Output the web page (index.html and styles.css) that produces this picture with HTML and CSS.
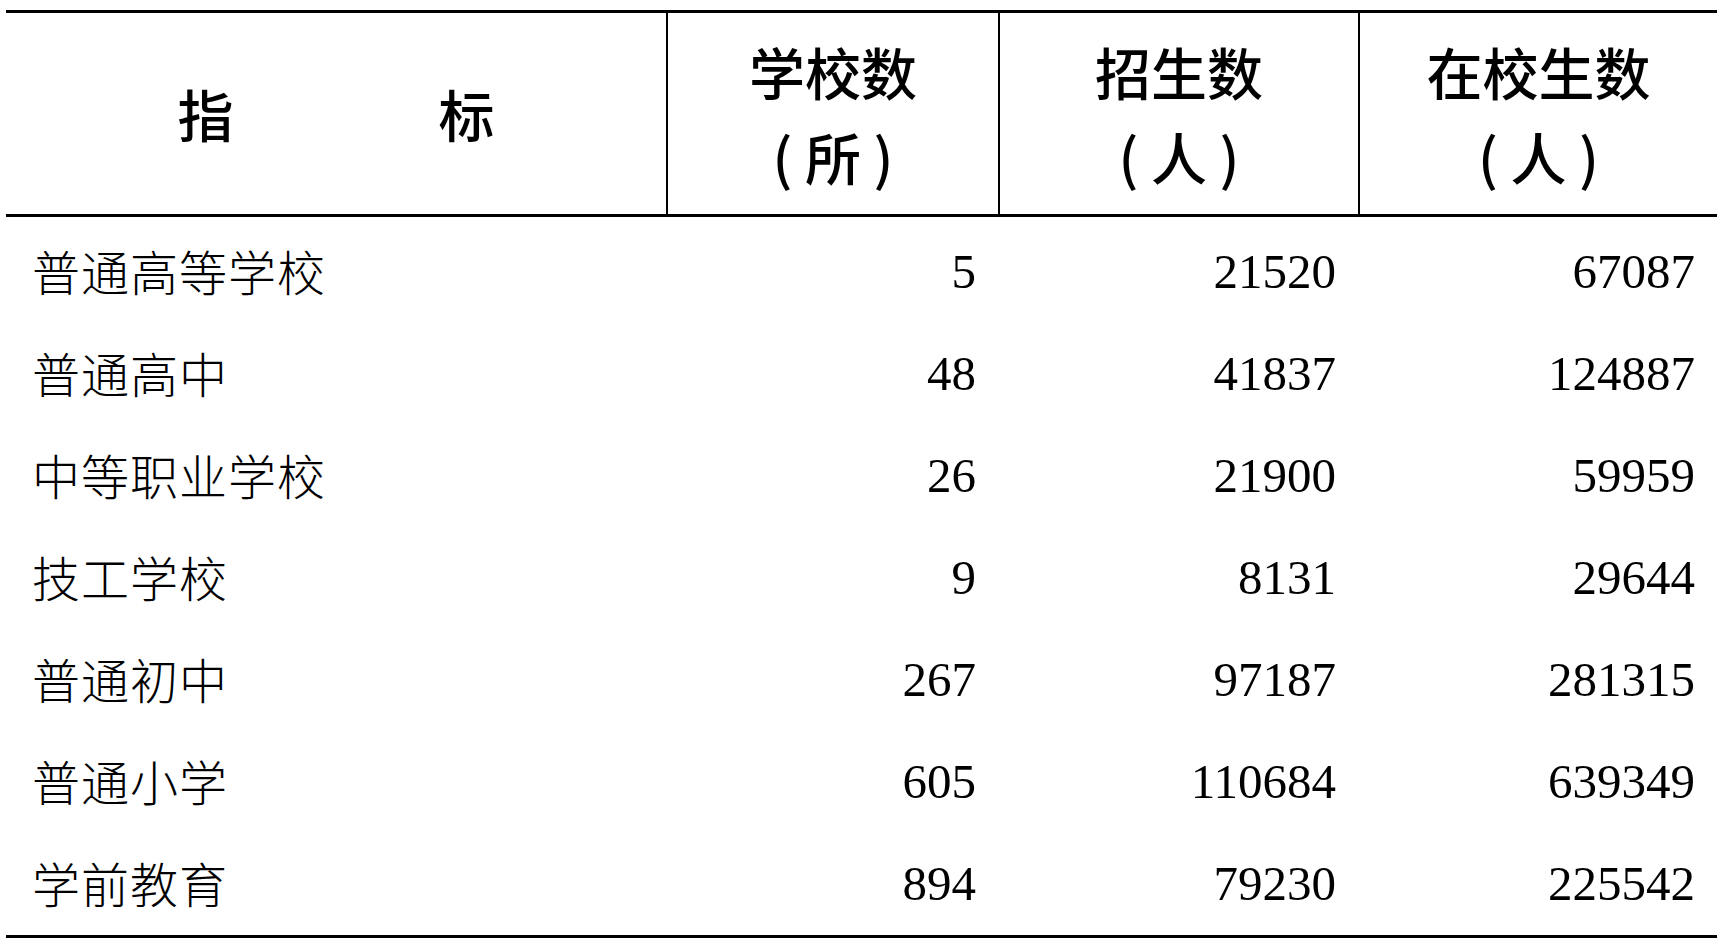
FILE: index.html
```html
<!DOCTYPE html>
<html lang="zh-CN">
<head>
<meta charset="utf-8">
<title>教育统计</title>
<link rel="stylesheet" href="styles.css">
</head>
<body>
<div class="table">
  <div class="thead">
    <div class="th th-index"><span>指</span><span>标</span></div>
    <div class="th"><span>学校数</span><span>( 所 )</span></div>
    <div class="th"><span>招生数</span><span>( 人 )</span></div>
    <div class="th"><span>在校生数</span><span>( 人 )</span></div>
  </div>
  <div class="tbody">
    <div class="row"><div class="label">普通高等学校</div><div class="num">5</div><div class="num">21520</div><div class="num">67087</div></div>
    <div class="row"><div class="label">普通高中</div><div class="num">48</div><div class="num">41837</div><div class="num">124887</div></div>
    <div class="row"><div class="label">中等职业学校</div><div class="num">26</div><div class="num">21900</div><div class="num">59959</div></div>
    <div class="row"><div class="label">技工学校</div><div class="num">9</div><div class="num">8131</div><div class="num">29644</div></div>
    <div class="row"><div class="label">普通初中</div><div class="num">267</div><div class="num">97187</div><div class="num">281315</div></div>
    <div class="row"><div class="label">普通小学</div><div class="num">605</div><div class="num">110684</div><div class="num">639349</div></div>
    <div class="row"><div class="label">学前教育</div><div class="num">894</div><div class="num">79230</div><div class="num">225542</div></div>
  </div>
</div>
</body>
</html>
```
FILE: styles.css
```css
html, body {
  margin: 0;
  padding: 0;
  background: #ffffff;
}

body {
  color: #000000;
  font-family: "Noto Sans CJK SC", sans-serif;
}

.table {
  margin: 10px 0 0 6px;
  width: 1711px;
  border-top: 3px solid #000;
  border-bottom: 3px solid #000;
}

.thead,
.row {
  display: grid;
  grid-template-columns: 660px 332px 360px 359px;
}

.thead {
  height: 201px;
  border-bottom: 3px solid #000;
}

.th {
  display: flex;
  flex-direction: column;
  align-items: center;
  justify-content: center;
  padding-bottom: 2px;
  box-sizing: border-box;
  font-family: "Noto Sans CJK SC", sans-serif;
  font-weight: 500;
  font-size: 56px;
  line-height: 85px;
  white-space: pre;
}

.th + .th {
  border-left: 2px solid #000;
}

.th-index {
  flex-direction: row;
  gap: 205px;
}

.tbody {
  height: 718px;
  padding-top: 4px;
  box-sizing: border-box;
}

.row {
  height: 102px;
  align-items: center;
}

.label {
  padding-left: 26px;
  padding-bottom: 5px;
  font-family: "Noto Sans CJK SC", sans-serif;
  font-weight: 300;
  font-size: 48px;
  letter-spacing: 1px;
  line-height: 60px;
}

.num {
  padding-right: 22px;
  text-align: right;
  font-family: "Liberation Serif", "Times New Roman", serif;
  font-size: 49px;
  line-height: 60px;
}
```
